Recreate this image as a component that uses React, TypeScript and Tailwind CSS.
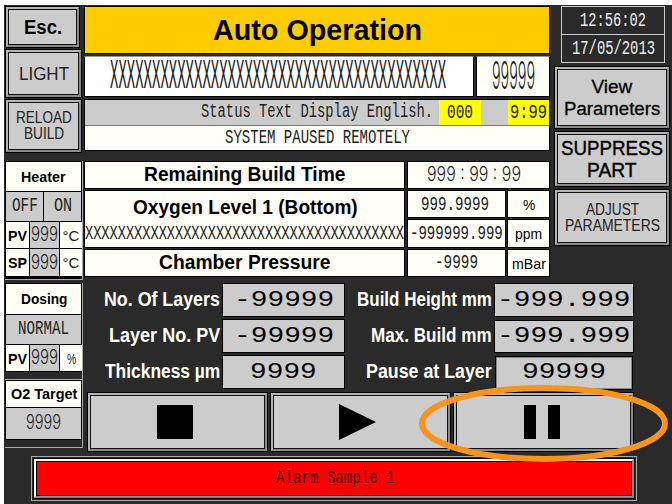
import { useLayoutEffect, useRef, type ReactNode } from "react";
import { clsx } from "clsx";

const SANS = "font-['Liberation_Sans',Arial,sans-serif]";
const MONO_FACE = "font-['Liberation_Mono','Courier_New',monospace]";
const MONO = "font-['Liberation_Mono','Courier_New',monospace] pt-[0.12em]";
const THIN = "font-['Inter',sans-serif] font-light";

/** One line of text stretched or squeezed horizontally to the given width. */
function Fit({ w, c = "", children }: { w: number; c?: string; children: string }) {
  const box = useRef<HTMLDivElement>(null);
  const ref = useRef<HTMLSpanElement>(null);
  useLayoutEffect(() => {
    const fit = () => {
      const el = ref.current;
      if (el && box.current) {
        box.current.style.width = w + "px";
        el.style.transform = `scaleX(${w / el.offsetWidth})`;
      }
    };
    fit();
    document.fonts?.ready.then(fit);
  }, [w, children]);
  return (
    <div ref={box} className={clsx("shrink-0 leading-none whitespace-pre", c)}>
      <span ref={ref} className="inline-block origin-left align-top">{children}</span>
    </div>
  );
}

function Bevel({ c, children }: { c: string; children?: ReactNode }) {
  return (
    <div className={clsx("shrink-0 border border-black bg-[#777]", c)}>
      <div className="h-full w-full border-2 border-t-[#b5b5b5] border-r-[#8c8c8c] border-b-[#8c8c8c] border-l-[#b5b5b5]">
        <div className="flex h-full w-full flex-col items-center justify-center border border-[#111] bg-[#ccc]">{children}</div>
      </div>
    </div>
  );
}

function Cell({ c, children }: { c: string; children?: ReactNode }) {
  return <div className={clsx("flex shrink-0 items-center justify-center", c)}>{children}</div>;
}

const WHITE = "bg-[#fffff8]";
const GREY = "bg-[#ccc]";

function PvRow({ label, unit, uw, h }: { label: string; unit: string; uw: number; h: string }) {
  return (
    <div className={clsx("flex shrink-0 gap-px", h)}>
      <Cell c={clsx("w-[23px]", WHITE)}><Fit w={19} c={clsx(SANS, "text-[15px] font-bold")}>{label}</Fit></Cell>
      <Cell c={clsx("w-[29px]", GREY)}><Fit w={27} c={clsx(THIN, "mt-[-2px] text-[20px] text-[#222]")}>999</Fit></Cell>
      <Cell c={clsx("w-[22px]", WHITE)}><Fit w={uw} c={clsx(SANS, "text-[15px] text-[#222]")}>{unit}</Fit></Cell>
    </div>
  );
}

function Value({ c, w, children }: { c: string; w: number; children: string }) {
  return <Cell c={clsx("border border-black bg-[#ccc]", c)}><Fit w={w} c={clsx(MONO, "mt-[-1px] text-[22px]")}>{children}</Fit></Cell>;
}

export default function App() {
  return (
    <div className={clsx("h-[504px] w-[672px] overflow-hidden bg-white pt-[5px] pl-1 text-black", SANS)}>
      <div className="relative h-[499px] w-[668px] bg-[#2a2a2a] pt-px pl-px">
        <div className="flex h-[277px]">
          {/* left controls */}
          <div className="w-[78px] shrink-0">
            <Bevel c="h-[42px] w-[75px]"><Fit w={38} c="text-[20px] font-bold">Esc.</Fit></Bevel>
            <Bevel c="mt-px h-[49px] w-[77px]"><Fit w={50} c="text-[18px] text-[#222]">LIGHT</Fit></Bevel>
            <Bevel c="mt-px h-[54px] w-[77px]">
              <Fit w={56} c="text-[16px] text-[#222]">RELOAD</Fit>
              <Fit w={40} c="text-[16px] text-[#222]">BUILD</Fit>
            </Bevel>
            <div className="mt-[8px] flex h-[119px] w-[78px] flex-col gap-px border-r border-b border-[#aaa] bg-black pt-px pr-px pl-px">
              <Cell c={clsx("h-[29px]", WHITE)}><Fit w={45} c="text-[14px] font-bold">Heater</Fit></Cell>
              <div className="flex h-[29px] shrink-0 gap-px">
                <Cell c={clsx("w-[37px]", GREY)}><Fit w={26} c={clsx(MONO, "mt-[-4px] text-[21px] text-[#222]")}>OFF</Fit></Cell>
                <Cell c={clsx("w-[37px]", GREY)}><Fit w={18} c={clsx(MONO, "mt-[-4px] text-[21px] text-[#222]")}>ON</Fit></Cell>
              </div>
              <PvRow label="PV" unit="°C" uw={17} h="h-[26px]" />
              <PvRow label="SP" unit="°C" uw={17} h="h-[27px]" />
            </div>
          </div>

          {/* centre displays */}
          <div className="w-[467px] shrink-0 pl-px">
            <div className="flex h-[48px] items-center justify-center border border-black bg-[#fc0]">
              <Fit w={209} c="text-[29px] font-bold">Auto Operation</Fit>
            </div>
            <div className="mt-[2px] flex h-[41px] gap-[2px]">
              <Cell c="w-[390px] border border-t-[#999] border-r-black border-b-black border-l-black bg-white">
                <Fit w={336} c={clsx(MONO_FACE, "mr-[3px] -mt-[3px] pt-[3px] text-[43px] text-[#222]")}>{"X".repeat(40)}</Fit>
              </Cell>
              <Cell c={clsx("w-[74px] border border-t-[#999] border-r-black border-b-black border-l-black", WHITE)}>
                <Fit w={43} c={clsx(THIN, "-mt-[4px] text-[38px] text-[#222]")}>99999</Fit>
              </Cell>
            </div>
            <div className="mt-[2px] flex h-[52px] flex-col gap-px border border-black bg-[#777]">
              <div className="flex h-[25px] shrink-0 bg-[#ccc]">
                <div className="flex w-[354px] items-center justify-end pr-[6px]">
                  <Fit w={232} c={clsx(MONO, "mt-[-3px] text-[20px] text-[#222]")}>Status Text Display English.</Fit>
                </div>
                <Cell c="w-[42px] bg-[#ff0]"><Fit w={26} c={clsx(MONO, "mt-[-2px] text-[20px] text-[#222]")}>000</Fit></Cell>
                <Cell c="ml-auto w-[41px] bg-[#ff0]"><Fit w={37} c={clsx(MONO, "mt-[-2px] text-[20px] text-[#222]")}>9:99</Fit></Cell>
              </div>
              <div className={clsx("flex h-[24px] items-center justify-center", WHITE)}>
                <Fit w={185} c={clsx(MONO, "mt-[-3px] text-[20px] text-[#222]")}>SYSTEM PAUSED REMOTELY</Fit>
              </div>
            </div>
            <div className="mt-[10px] flex h-[116px] gap-[2px]">
              <div className="flex w-[321px] flex-col gap-px">
                <Cell c={clsx("h-[28px] border border-black", WHITE)}><Fit w={201} c="text-[19.5px] font-bold">Remaining Build Time</Fit></Cell>
                <div className={clsx("flex h-[58px] flex-col items-center border border-black pt-[7px]", WHITE)}>
                  <Fit w={225} c="ml-[2px] text-[19.5px] font-bold">Oxygen Level 1 (Bottom)</Fit>
                  <Fit w={319} c={clsx(MONO, "mt-[4px] text-[20px] text-[#222]")}>{"X".repeat(39)}</Fit>
                </div>
                <Cell c={clsx("h-[28px] border border-black", WHITE)}><Fit w={171} c="text-[19.5px] font-bold">Chamber Pressure</Fit></Cell>
              </div>
              <div className="flex w-[143px] flex-col gap-px">
                <Cell c={clsx("h-[28px] border border-black", WHITE)}><Fit w={94} c={clsx(THIN, "mr-[9px] -mt-[2px] text-[20px] text-[#222]")}>999 : 99 : 99</Fit></Cell>
                <div className="flex h-[28px] gap-px">
                  <Cell c={clsx("w-[99px] border border-black", WHITE)}><Fit w={68} c={clsx(MONO, "mr-[3px] mt-[-2px] text-[21px] text-[#222]")}>999.9999</Fit></Cell>
                  <Cell c={clsx("w-[43px] border border-black", WHITE)}><Fit w={12} c="text-[15px]">%</Fit></Cell>
                </div>
                <div className="flex h-[29px] gap-px">
                  <Cell c={clsx("w-[99px] border border-black", WHITE)}><Fit w={93} c={clsx(MONO, "mt-[-2px] text-[21px] text-[#222]")}>-999999.999</Fit></Cell>
                  <Cell c={clsx("w-[43px] border border-black", WHITE)}><Fit w={27} c="text-[15px]">ppm</Fit></Cell>
                </div>
                <div className="flex h-[28px] gap-px">
                  <Cell c={clsx("w-[99px] border border-black", WHITE)}><Fit w={43} c={clsx(MONO, "mt-[-3px] text-[21px] text-[#222]")}>-9999</Fit></Cell>
                  <Cell c={clsx("w-[43px] border border-black", WHITE)}><Fit w={34} c="text-[15px]">mBar</Fit></Cell>
                </div>
              </div>
            </div>
          </div>

          {/* clock and right-hand buttons */}
          <div className="ml-[4px] w-[116px] shrink-0">
            <div className="ml-[7px] flex h-[57px] w-[104px] flex-col border border-[#ccc] text-[#eee]">
              <Cell c="h-[28px] border-b border-[#ccc]"><Fit w={66} c={clsx(MONO, "mt-[-2px] text-[21px]")}>12:56:02</Fit></Cell>
              <Cell c="h-[27px]"><Fit w={83} c={clsx(MONO, "mt-[-2px] text-[21px]")}>17/05/2013</Fit></Cell>
            </div>
            <Bevel c="mt-[3px] h-[63px] w-[116px]">
              <Fit w={41} c="text-[19px] [-webkit-text-stroke:0.3px_black]">View</Fit>
              <Fit w={96} c="mt-[3px] text-[19px] [-webkit-text-stroke:0.3px_black]">Parameters</Fit>
            </Bevel>
            <Bevel c="mt-[2px] h-[56px] w-[116px]">
              <Fit w={102} c="text-[20px] [-webkit-text-stroke:0.4px_black]">SUPPRESS</Fit>
              <Fit w={50} c="mt-[2px] text-[20px] [-webkit-text-stroke:0.4px_black]">PART</Fit>
            </Bevel>
            <Bevel c="mt-[2px] h-[57px] w-[116px]">
              <Fit w={53} c="text-[16px] text-[#222]">ADJUST</Fit>
              <Fit w={95} c="text-[16px] text-[#222]">PARAMETERS</Fit>
            </Bevel>
          </div>
        </div>

        <div className="flex h-[173px]">
          <div className="w-[78px] shrink-0">
            <div className="flex h-[97px] w-[78px] flex-col border-r border-b border-[#aaa]">
              <div className="flex w-[77px] flex-col gap-px border border-black bg-black">
                <Cell c={clsx("h-[30px]", WHITE)}><Fit w={46} c="text-[14px] font-bold">Dosing</Fit></Cell>
                <Cell c={clsx("h-[29px]", GREY)}><Fit w={51} c={clsx(MONO, "mt-[-4px] text-[20px] text-[#222]")}>NORMAL</Fit></Cell>
                <PvRow label="PV" unit="%" uw={9} h="h-[26px]" />
              </div>
            </div>
            <div className="flex h-[68px] w-[78px] flex-col border-r border-b border-[#aaa]">
              <div className="flex w-[77px] flex-col gap-px border border-black bg-black">
                <Cell c={clsx("h-[26px]", WHITE)}><Fit w={66} c="text-[14px] font-bold">O2 Target</Fit></Cell>
                <Cell c={clsx("h-[31px]", GREY)}><Fit w={35} c={clsx(THIN, "-mt-[3px] text-[20px] text-[#222]")}>9999</Fit></Cell>
              </div>
            </div>
          </div>

          <div className="ml-[4px] w-[547px] shrink-0">
            <div className="flex h-[109px] text-[19.5px] font-bold text-[#fffff8]">
              <div className="flex w-[133px] flex-col items-end gap-[2px]">
                <Cell c="h-[34px]"><Fit w={116}>No. Of Layers</Fit></Cell>
                <Cell c="h-[34px]"><Fit w={111}>Layer No. PV</Fit></Cell>
                <Cell c="h-[33px]"><Fit w={115}>Thickness µm</Fit></Cell>
              </div>
              <div className="ml-[2px] flex w-[123px] flex-col gap-[2px] font-normal text-black">
                <Value c="h-[34px]" w={100}>-99999</Value>
                <Value c="h-[34px]" w={100}>-99999</Value>
                <Value c="h-[34px]" w={67}>9999</Value>
              </div>
              <div className="flex w-[149px] flex-col items-end gap-[2px] pr-[2px]">
                <Cell c="h-[34px]"><Fit w={135}>Build Height mm</Fit></Cell>
                <Cell c="h-[34px]"><Fit w={121}>Max. Build mm</Fit></Cell>
                <Cell c="h-[33px]"><Fit w={126}>Pause at Layer</Fit></Cell>
              </div>
              <div className="flex w-[140px] flex-col gap-[3px] font-normal text-black">
                <Value c="h-[34px]" w={134}>-999.999</Value>
                <Value c="h-[33px]" w={134}>-999.999</Value>
                <div className="ml-[1px] flex h-[34px] w-[138px] items-center justify-center border border-black bg-[#ccc] outline outline-1 -outline-offset-2 outline-[#888]">
                  <Fit w={84} c={clsx(MONO, "mt-[-3px] text-[22px]")}>99999</Fit>
                </div>
              </div>
            </div>
            <div className="flex gap-[2px]">
              <Bevel c="h-[60px] w-[181px]"><div className="-mt-px ml-[-5px] h-[34px] w-[36px] bg-black" /></Bevel>
              <Bevel c="h-[60px] w-[181px]">
                <svg width="37" height="36" viewBox="0 0 37 36" className="-mt-px ml-[-6px]"><path d="M0 0L37 18L0 36Z" /></svg>
              </Bevel>
              <Bevel c="h-[60px] w-[181px]">
                <div className="-mt-px ml-[-4px] flex gap-[12px]"><div className="h-[34px] w-[12px] bg-black" /><div className="h-[34px] w-[12px] bg-black" /></div>
              </Bevel>
            </div>
          </div>
        </div>

        <div className="ml-[26px] h-[45px] w-[606px] border border-[#aaa] p-px">
          <div className="h-full w-full border border-black">
            <div className="h-full w-full border-2 border-t-[#fffff0] border-r-[#888] border-b-[#888] border-l-[#fffff0]">
              <div className="flex h-full w-full items-center justify-center border border-black bg-[#f00]">
                <Fit w={119} c={clsx(MONO, "mt-[-2px] ml-[3px] text-[19px] text-[#3b0000]")}>Alarm Sample 1</Fit>
              </div>
            </div>
          </div>
        </div>

        {/* orange callout ring over the pause button */}
        <svg width="253" height="80" viewBox="0 0 253 80" className="absolute top-[378px] left-[413px]">
          <ellipse cx="126.5" cy="40.5" rx="121.5" ry="35.5" fill="none" stroke="#f7941d" strokeWidth="6" />
        </svg>
      </div>
    </div>
  );
}
